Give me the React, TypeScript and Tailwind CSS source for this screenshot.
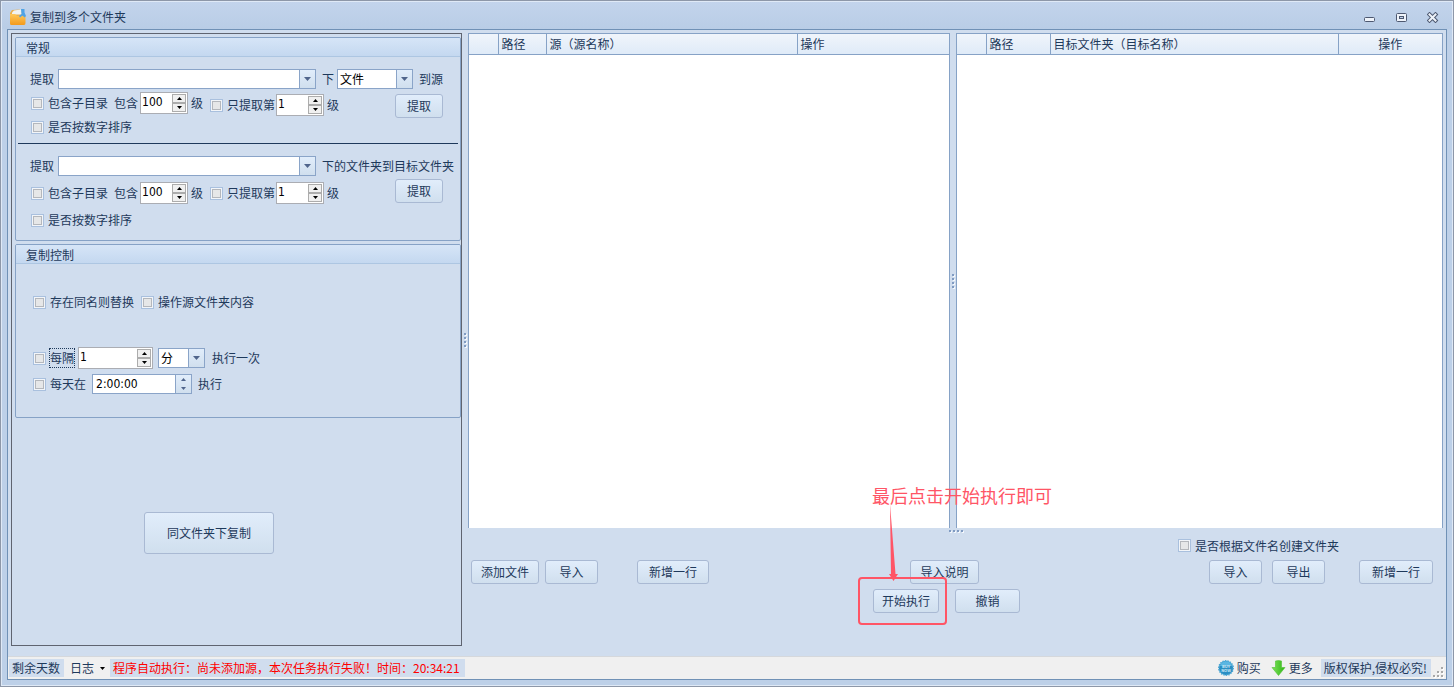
import { useState } from 'react';
import type { ReactNode } from 'react';

const FONT = 'font-["Noto_Sans_CJK_SC",sans-serif]';
const NUM_FONT = 'font-["DejaVu_Sans_Condensed","Noto_Sans",sans-serif]';

function Btn({ children, className = 'h-6' }: { children: ReactNode; className?: string }) {
  return (
    <button
      type="button"
      className={`shrink-0 rounded-[3px] border border-[#a9b9d3] bg-linear-to-b from-[#e1edfb] to-[#d0dfee] text-center leading-5 whitespace-nowrap hover:border-[#7f9bc4] ${className}`}
    >
      {children}
    </button>
  );
}

function Check({ label, focused = false }: { label: string; focused?: boolean }) {
  return (
    <label className="flex shrink-0 items-center gap-1 whitespace-nowrap">
      <input
        type="checkbox"
        className="size-[13px] shrink-0 appearance-none border border-[#a9c0de] bg-[#e6e7e8] shadow-[inset_0_0_0_1px_#f2f5f9,inset_0_0_0_2px_#b4b7bc] checked:bg-[#1e395b]"
      />
      <span className={focused ? 'outline outline-dotted outline-[#1e395b]' : ''}>{label}</span>
    </label>
  );
}

function Combo({ label, options, className }: { label: string; options: string[]; className: string }) {
  return (
    <div className={`relative h-5 shrink-0 ${className}`}>
      <select
        aria-label={label}
        className="block h-5 w-full appearance-none border border-[#8aa4c8] bg-white pr-4 pl-[2px] leading-[18px] text-black outline-none"
      >
        {options.map((o) => (
          <option key={o}>{o}</option>
        ))}
      </select>
      <span className="pointer-events-none absolute inset-y-px right-px flex w-4 items-center justify-center border-l border-[#8aa4c8] bg-linear-to-b from-[#e1edfb] to-[#d0dfee]">
        <svg width="7" height="4" viewBox="0 0 7 4">
          <path d="M0 0h7L3.5 4z" fill="#50658c" />
        </svg>
      </span>
    </div>
  );
}

function Arrow({ up, color = '#000' }: { up?: boolean; color?: string }) {
  return (
    <svg width="5" height="3" viewBox="0 0 5 3">
      <path d={up ? 'M0 3h5L2.5 0z' : 'M0 0h5L2.5 3z'} fill={color} />
    </svg>
  );
}

function Spinner({ label, initial, className = 'w-12' }: { label: string; initial: number; className?: string }) {
  const [value, setValue] = useState(initial);
  const btn = 'flex h-[9px] w-[14px] items-center justify-center border border-[#acacac] bg-[#f0f0f0]';
  return (
    <div className={`flex h-[22px] shrink-0 border border-[#abadb3] bg-white p-px ${className}`}>
      <input
        type="text"
        aria-label={label}
        value={value}
        onChange={(e) => setValue(Number(e.target.value) || 0)}
        className={`h-4 w-full min-w-0 flex-1 leading-4 text-black outline-none ${NUM_FONT}`}
      />
      <div className="flex shrink-0 flex-col">
        <button type="button" aria-label={`${label} +`} className={btn} onClick={() => setValue(value + 1)}>
          <Arrow up />
        </button>
        <button type="button" aria-label={`${label} -`} className={btn} onClick={() => setValue(value - 1)}>
          <Arrow />
        </button>
      </div>
    </div>
  );
}

function TimeBox() {
  return (
    <div className="flex h-5 w-[100px] shrink-0 border border-[#8aa4c8] bg-white">
      <input
        type="text"
        aria-label="执行时间"
        defaultValue="2:00:00"
        className={`w-full min-w-0 flex-1 pl-[3px] leading-[18px] text-black outline-none ${NUM_FONT}`}
      />
      <div className="flex w-4 shrink-0 flex-col border-l border-[#8aa4c8] bg-linear-to-b from-[#e1edfb] to-[#d0dfee]">
        <button type="button" aria-label="时间 +" className="flex flex-1 items-center justify-center">
          <Arrow up color="#50658c" />
        </button>
        <button type="button" aria-label="时间 -" className="flex flex-1 items-center justify-center">
          <Arrow color="#50658c" />
        </button>
      </div>
    </div>
  );
}

function Group({ title, className, children }: { title: string; className?: string; children: ReactNode }) {
  return (
    <section className={`rounded-[2px] border border-[#86a2c6] ${className}`}>
      <h2 className="h-[19px] rounded-t-[1px] border-b border-[#adc6e2] bg-linear-to-b from-[#d6e5f7] to-[#c4d8f0] pl-[10px] leading-5">
        {title}
      </h2>
      {children}
    </section>
  );
}

function Levels() {
  return (
    <>
      <Check label="包含子目录" />
      <span className="ml-[6px]">包含</span>
      <div className="ml-[2px]">
        <Spinner label="包含级数" initial={100} />
      </div>
      <span className="ml-[3px]">级</span>
    </>
  );
}

function OnlyLevel() {
  return (
    <>
      <Check label="只提取第" />
      <div className="ml-px">
        <Spinner label="提取级" initial={1} />
      </div>
      <span className="ml-[3px]">级</span>
    </>
  );
}

function Dots({ vertical }: { vertical?: boolean }) {
  return (
    <div className={`flex items-center justify-center gap-[2px] ${vertical ? 'w-[6px] shrink-0 flex-col' : 'h-[6px]'}`}>
      {[0, 1, 2, 3].map((i) => (
        <span key={i} className="size-[2px] bg-[#809bc2] shadow-[1px_1px_0_#f4f8fd]" />
      ))}
    </div>
  );
}

type Col = { title: string; width: string };

function Grid({ cols, label, centerLast }: { cols: Col[]; label: string; centerLast?: boolean }) {
  return (
    <div className="border-x border-t border-[#86a2c6] bg-white">
      <table aria-label={label} className="w-full table-fixed border-collapse">
        <thead>
          <tr className="h-5 border-b border-[#86a2c6] bg-linear-to-b from-[#f0f5fb] to-[#dfebf8]">
            {cols.map((c, i) => (
              <th
                key={i}
                className={`truncate border-r border-[#86a2c6] px-[3px] py-0 leading-5 font-normal last:border-r-0 ${c.width} ${
                  centerLast && i === cols.length - 1 ? 'text-center' : 'text-left'
                }`}
              >
                {c.title}
              </th>
            ))}
          </tr>
        </thead>
        <tbody />
      </table>
    </div>
  );
}

const sourceCols: Col[] = [
  { title: '', width: 'w-[29px]' },
  { title: '路径', width: 'w-12' },
  { title: '源（源名称）', width: '' },
  { title: '操作', width: 'w-[152px]' },
];

const targetCols: Col[] = [
  { title: '', width: 'w-[29px]' },
  { title: '路径', width: 'w-16' },
  { title: '目标文件夹（目标名称）', width: '' },
  { title: '操作', width: 'w-[104px]' },
];

function AppIcon() {
  return (
    <svg width="16" height="16" viewBox="0 0 16 16">
      <defs>
        <linearGradient id="folder" x1="0" y1="0" x2="0" y2="1">
          <stop offset="0" stopColor="#ffc95a" />
          <stop offset="1" stopColor="#f39a1d" />
        </linearGradient>
      </defs>
      <path d="M0 4l2-3 8-.5L14 6v4H0z" fill="#e9b052" />
      <path d="M2 3.5L4 1.5l7-1 1 5H2z" fill="#f1f3f2" />
      <path d="M0 5h5L7 7h8.500v7q0 2-1.500 2H1.500Q0 16 0 14.500z" fill="url(#folder)" />
      <path d="M11 0h3.500v3.500L16 7l-1.500 1.500L12.500 6.500 10 8.500 9 7l2.500-2z" fill="#4fa3e6" />
    </svg>
  );
}

function TitleBar() {
  return (
    <header className="flex h-7 shrink-0 items-center pr-[14px] pl-[9px] pt-1">
      <AppIcon />
      <h1 className="ml-1 flex-1">复制到多个文件夹</h1>
      <div className="flex items-center gap-5">
        <button type="button" aria-label="最小化">
          <svg width="12" height="11" viewBox="0 0 12 11">
            <rect x="0.500" y="5.500" width="10" height="4" rx="1" fill="#eef3fa" stroke="#4d5870" />
          </svg>
        </button>
        <button type="button" aria-label="最大化">
          <svg width="11" height="11" viewBox="0 0 11 11">
            <rect x="0.500" y="1.500" width="10" height="8" rx="1" fill="#eef3fa" stroke="#4d5870" />
            <rect x="3.500" y="4.500" width="4" height="2" fill="#c1d3eb" stroke="#4d5870" />
          </svg>
        </button>
        <button type="button" aria-label="关闭">
          <svg width="12" height="11" viewBox="0 0 12 11">
            <path d="M2.500 2.500l6 6M8.500 2.500l-6 6" stroke="#4d5870" strokeWidth="4" strokeLinecap="square" />
            <path d="M2.500 2.500l6 6M8.500 2.500l-6 6" stroke="#eef3fa" strokeWidth="2" strokeLinecap="square" />
          </svg>
        </button>
      </div>
    </header>
  );
}

function SidePanel() {
  return (
    <aside className="w-[451px] shrink-0 border border-[#5f6470] pt-[3px] pl-[3px]">
      <Group title="常规">
        <div className="flex items-center pt-3 pl-[14px]">
          <span>提取</span>
          <Combo label="源路径" options={['']} className="ml-1 w-[258px]" />
          <span className="ml-[6px]">下</span>
          <Combo label="类型" options={['文件', '文件夹']} className="ml-[3px] w-[76px]" />
          <span className="ml-[6px]">到源</span>
        </div>
        <div className="mt-[3px] flex h-[26px] pr-[17px] pl-[15px]">
          <div className="flex items-center self-start">
            <Levels />
          </div>
          <div className="ml-[7px] flex items-center self-center">
            <OnlyLevel />
          </div>
          <Btn className="ml-auto h-6 w-12 self-end">提取</Btn>
        </div>
        <div className="flex h-[18px] items-center pl-[15px]">
          <Check label="是否按数字排序" />
        </div>
        <hr className="mx-[2px] mt-[7px] border-t border-[#1e395b]" />
        <div className="flex items-center pt-3 pl-[14px]">
          <span>提取</span>
          <Combo label="目标路径" options={['']} className="ml-1 w-[258px]" />
          <span className="ml-[6px]">下的文件夹到目标文件夹</span>
        </div>
        <div className="mt-[3px] flex h-[25px] pr-[17px] pl-[15px]">
          <div className="flex items-center self-end">
            <Levels />
          </div>
          <div className="ml-[7px] flex items-center self-end">
            <OnlyLevel />
          </div>
          <Btn className="ml-auto h-6 w-12 self-start">提取</Btn>
        </div>
        <div className="mt-[7px] mb-[11px] flex h-[18px] items-center pl-[15px]">
          <Check label="是否按数字排序" />
        </div>
      </Group>

      <Group title="复制控制" className="mt-[3px]">
        <div className="mt-7 flex h-5 items-center gap-[7px] pl-[17px]">
          <Check label="存在同名则替换" />
          <Check label="操作源文件夹内容" />
        </div>
        <div className="mt-[35px] flex items-center pl-[17px]">
          <Check label="每隔" focused />
          <div className="ml-1">
            <Spinner label="间隔" initial={1} className="w-[75px]" />
          </div>
          <Combo label="间隔单位" options={['分', '时', '秒']} className="ml-[5px] w-[47px]" />
          <span className="ml-[7px]">执行一次</span>
        </div>
        <div className="mt-[5px] mb-[23px] flex items-center pl-[17px]">
          <Check label="每天在" />
          <div className="ml-[6px]">
            <TimeBox />
          </div>
          <span className="ml-[6px]">执行</span>
        </div>
      </Group>

      <Btn className="mt-[94px] mb-4 ml-[129px] h-[42px] w-[130px]">同文件夹下复制</Btn>
    </aside>
  );
}

function StartHint() {
  return (
    <div className="pointer-events-none absolute -top-[106px] -left-[15px] text-[#ff5566]">
      <p className="ml-[14px] h-6 text-[18px] leading-6 whitespace-nowrap">最后点击开始执行即可</p>
      <svg width="90" height="72" viewBox="0 0 90 72" className="block overflow-visible">
        <path d="M32 -3L37.500 67H40L35.500 74 31 67H33z" fill="#ff5566" />
      </svg>
      <div className="-mt-[2px] h-12 w-[89px] rounded-[4px] border-2 border-[#ff5566]" />
    </div>
  );
}

function Toolbar() {
  return (
    <div className="pb-[33px]">
      <div className="flex h-[23px] items-center justify-end pr-[104px]">
        <Check label="是否根据文件名创建文件夹" />
      </div>
      <div className="mt-[3px] flex pr-[10px] pl-[3px]">
        <Btn className="h-6 w-[68px]">添加文件</Btn>
        <Btn className="ml-[6px] h-6 w-[53px]">导入</Btn>
        <Btn className="ml-[39px] h-6 w-[72px]">新增一行</Btn>
        <Btn className="ml-[201px] h-6 w-[69px]">导入说明</Btn>
        <Btn className="ml-auto h-6 w-[53px]">导入</Btn>
        <Btn className="ml-[10px] h-6 w-[53px]">导出</Btn>
        <Btn className="ml-[34px] h-6 w-[74px]">新增一行</Btn>
      </div>
      <div className="mt-[5px] flex gap-4 pl-[405px]">
        <div className="relative">
          <Btn className="h-6 w-[66px]">开始执行</Btn>
          <StartHint />
        </div>
        <Btn className="h-6 w-[65px]">撤销</Btn>
      </div>
    </div>
  );
}

function BuyIcon() {
  return (
    <svg width="16" height="16" viewBox="0 0 16 16">
      <circle cx="8" cy="8" r="7.200" fill="#2b8fc4" stroke="#4aa6d4" strokeWidth="1.500" strokeDasharray="1.500 1" />
      <path d="M2 6a6.200 6.200 0 0 1 12 0z" fill="#5ab6e2" />
      <text x="8" y="7.500" textAnchor="middle" fontSize="4" fontWeight="bold" fill="#cfe9f6">BUY</text>
      <text x="8" y="11.500" textAnchor="middle" fontSize="4" fontWeight="bold" fill="#cfe9f6">NOW</text>
    </svg>
  );
}

function StatusBar() {
  return (
    <footer className="flex h-[23px] shrink-0 items-center border-t border-[#d5d8dc] bg-[#f0f0f0] pl-px leading-[18px] whitespace-nowrap">
      <span className="bg-[#d0ddee] pr-1 pl-[3px]">剩余天数</span>
      <button type="button" className="ml-[6px] flex items-center gap-[6px]">
        日志
        <Arrow />
      </button>
      <span className="ml-[5px] bg-[#d0ddee] pr-[5px] pl-[3px] text-[#ff0000]">
        程序自动执行：尚未添加源，本次任务执行失败！时间：20:34:21
      </span>
      <a href="#buy" className="ml-auto flex items-center gap-[3px]">
        <BuyIcon />
        购买
      </a>
      <a href="#more" className="ml-[10px] flex items-center gap-[3px]">
        <svg width="15" height="16" viewBox="0 0 15 16">
          <defs>
            <linearGradient id="down" x1="0" y1="0" x2="1" y2="0">
              <stop offset="0" stopColor="#7fe35a" />
              <stop offset="1" stopColor="#2fb516" />
            </linearGradient>
          </defs>
          <path d="M4.500 1q3-1 6 0v6.500h3.500L7.500 15.500 1 7.500h3.500z" fill="url(#down)" stroke="#4fbf34" strokeWidth="0.600" />
        </svg>
        更多
      </a>
      <span className="ml-2 bg-[#d0ddee] pr-1 pl-[3px]">版权保护,侵权必究!</span>
      <svg width="12" height="12" viewBox="0 0 12 12" className="mr-px ml-[2px] self-end">
        {[[8, 0], [4, 4], [8, 4], [0, 8], [4, 8], [8, 8]].map(([x, y]) => (
          <g key={`${x}-${y}`}>
            <rect x={x + 1} y={y + 1} width="2" height="2" fill="#fff" />
            <rect x={x} y={y} width="2" height="2" fill="#a8a8a8" />
          </g>
        ))}
      </svg>
    </footer>
  );
}

export default function App() {
  return (
    <div
      className={`flex min-h-screen min-w-fit flex-col border border-[#8d97a8] bg-[#bdd0e8] bg-linear-to-b from-[#c3d4ec] to-[#b9cde6] bg-size-[100%_28px] bg-no-repeat pb-[6px] text-[12px] leading-[18px] text-[#1e395b] shadow-[inset_1px_1px_0_#dfe9f6,inset_-1px_-1px_0_#dfe9f6] ${FONT}`}
    >
      <TitleBar />
      <div className="mx-[6px] flex flex-1 flex-col border border-[#7091b6] bg-[#d0ddee]">
        <main className="flex flex-1 px-[3px] pt-[3px] pb-[10px]">
          <SidePanel />
          <Dots vertical />
          <div className="flex min-w-0 flex-1 flex-col">
            <div className="grid flex-1 grid-cols-[482fr_6px_487fr]">
              <Grid cols={sourceCols} label="源" />
              <Dots vertical />
              <Grid cols={targetCols} label="目标文件夹" centerLast />
            </div>
            <Dots />
            <Toolbar />
          </div>
        </main>
        <StatusBar />
      </div>
    </div>
  );
}
